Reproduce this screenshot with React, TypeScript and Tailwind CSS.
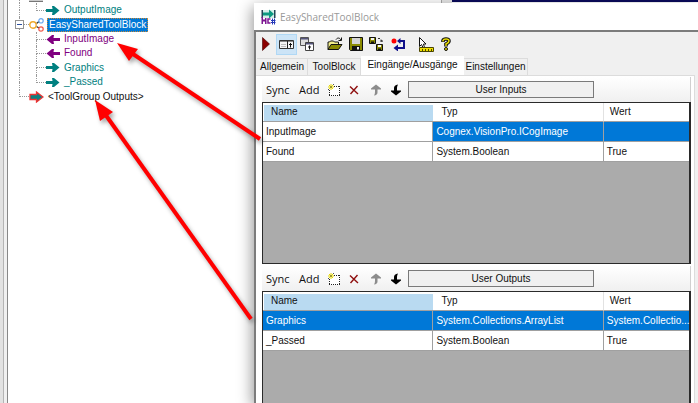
import React from "react";
import clsx from "clsx";

type IconProps = { className?: string };

const ArrowRight = ({ className }: IconProps) => (
  <svg viewBox="0 0 14 11" className={clsx("h-[11px] w-[14px] shrink-0", className)} aria-hidden="true">
    <path d="M0 4h6.500L6 1H8L13.500 5.500L8 10H6L6.500 7H0z" fill="currentColor" />
  </svg>
);

const ArrowLeft = ({ className }: IconProps) => (
  <svg viewBox="0 0 14 11" className={clsx("h-[11px] w-[14px] shrink-0", className)} aria-hidden="true">
    <path d="M14 4H7.500L8 1H6L0.500 5.500L6 10H8L7.500 7H14z" fill="currentColor" />
  </svg>
);

const OutputsIcon = () => (
  <svg viewBox="0 0 15 12" className="h-[12px] w-[15px] shrink-0" aria-hidden="true">
    <path d="M1 3.500h6.500V1L14 6L7.500 11V8.500H1z" fill="#0b8080" stroke="#e33" strokeWidth="1.300" />
  </svg>
);

const ToolBlockIcon = () => (
  <svg viewBox="0 0 15 14" className="h-[14px] w-[15px] shrink-0" fill="none" aria-hidden="true">
    <path d="M7.500 5.500L10 3.500M7.500 8.500L10 10" stroke="#333" strokeWidth="1.400" />
    <circle cx="4" cy="7" r="3.200" stroke="#f0a92c" strokeWidth="1.400" />
    <circle cx="12" cy="2.800" r="2.200" stroke="#6caaf0" strokeWidth="1.200" />
    <circle cx="12" cy="11" r="2.200" stroke="#f0594c" strokeWidth="1.200" />
  </svg>
);

const AppIcon = () => (
  <svg viewBox="0 0 15 16" className="h-[16px] w-[15px] shrink-0" aria-hidden="true">
    <path d="M1 1h13v8H1z" fill="#d5efea" />
    <path d="M0.500 1h1.500v8H0.500z" fill="#245" />
    <path d="M2 3.500h6V0.500L13 5L8 9.500V6.500H2z" fill="#0d9a82" />
    <path d="M13 1h1.500v8H13z" fill="#245" />
    <path d="M0.500 8H2v2.500h2V9h1.500v6H4v-2.500H2V15H0.500z" fill="#7d1692" />
    <path d="M9.500 10H7v4h2.500" stroke="#7d1692" strokeWidth="1.500" fill="none" />
    <path d="M10 11.500h4.500M10 13.500h4.500M11.500 9.500v6M13.500 9.500v6" stroke="#2438b8" fill="none" />
  </svg>
);

const RunIcon = () => (
  <svg viewBox="0 0 8 14" className="h-[14px] w-[8px]" aria-hidden="true">
    <path d="M0.500 0.500L7.500 7L0.500 13.500z" fill="#8b0000" stroke="#400" strokeWidth="0.600" />
  </svg>
);

const PanelIcon = () => (
  <svg viewBox="0 0 15 9" className="h-[9px] w-[15px]" aria-hidden="true">
    <path d="M0.500 0.500h14v8h-14z" fill="#f4f4f4" stroke="#333" />
    <path d="M1 1h13v1H1z" fill="#888" />
    <path d="M2 4.500h5M2 6.500h5" stroke="#bbb" />
    <path d="M8.500 1v7" stroke="#222" />
    <path d="M11.500 3v4.500M10 4.500h3" stroke="#111" />
  </svg>
);

const FloatIcon = () => (
  <svg viewBox="0 0 14 14" className="h-[14px] w-[14px]" aria-hidden="true">
    <path d="M0.500 0.500h8v8h-8z" fill="#ddd" stroke="#555" />
    <path d="M1 1h7v1.500H1z" fill="#55557c" />
    <path d="M5.500 5.500h8v8h-8z" fill="#fff" stroke="#444" />
    <path d="M6 6h7v1.500H6z" fill="#55557c" />
    <path d="M9.500 8.500v4M8 10h3" stroke="#111" />
  </svg>
);

const OpenIcon = () => (
  <svg viewBox="0 0 16 14" className="h-[14px] w-[16px]" aria-hidden="true">
    <path d="M1 12.500V5h1.500l1-1h3l1 1h4v2" fill="#f2ee8a" stroke="#111" />
    <path d="M1 12.500L4 7.500h11l-3.500 5z" fill="#8a8a00" stroke="#111" />
    <path d="M9 2.500c1.500-2 3.500-2 5 0.500M14.500 0.500v3h-3" fill="none" stroke="#111" />
  </svg>
);

const SaveIcon = () => (
  <svg viewBox="0 0 14 14" className="h-[14px] w-[14px]" aria-hidden="true">
    <path d="M0.500 0.500h13v13h-12l-1-1z" fill="#8a8a00" stroke="#111" />
    <path d="M3 1h8v6H3z" fill="#d4d4d4" />
    <path d="M3 9h8v4H3z" fill="#111" />
    <path d="M8 10h2v2.500H8z" fill="#eee" />
  </svg>
);

const SaveAllIcon = () => (
  <svg viewBox="0 0 15 14" className="h-[14px] w-[15px]" aria-hidden="true">
    <path d="M0.500 0.500h6v6h-6zM7.500 7.500h6v6h-6z" fill="#8a8a00" stroke="#111" />
    <path d="M2 1h3v2H2zM9 8h3v2H9z" fill="#f4f4f4" />
    <path d="M2 4.500h3V6H2zM9 11.500h3V13H9z" fill="#111" />
    <path d="M9 1.500h2M12 2.500l1 2.500M11 4h3" stroke="#333" fill="none" />
  </svg>
);

const ResetIcon = () => (
  <svg viewBox="0 0 15 13" className="h-[13px] w-[15px]" aria-hidden="true">
    <circle cx="3" cy="3" r="2.500" fill="#f00" />
    <path d="M8 3h5v7H6" fill="none" stroke="#10108a" strokeWidth="2" />
    <path d="M2.500 10L7 6.500v7z" fill="#10108a" />
    <path d="M6 3L9.500 0v6z" fill="#10108a" />
  </svg>
);

const MeasureIcon = () => (
  <svg viewBox="0 0 16 15" className="h-[15px] w-[16px]" aria-hidden="true">
    <path d="M1.500 0.500v9l2-2l1.500 3h1.500L5.500 7h2.500z" fill="#fff" stroke="#111" />
    <path d="M1.500 10.500h14v4h-14z" fill="#f0e000" stroke="#4a4500" />
    <path d="M4.500 12v2M7.500 12v2M10.500 12v2M13.500 12v2" stroke="#4a4500" />
  </svg>
);

const HelpIcon = () => (
  <svg viewBox="0 0 10 14" className="h-[14px] w-[10px]" fill="none" aria-hidden="true">
    <path d="M2 5V3.500Q2.500 2 5 2Q8 2 8 4Q8 5.500 5 7V9.500" stroke="#111" strokeWidth="3.600" />
    <path d="M2 4.500V3.500Q2.500 2 5 2Q8 2 8 4Q8 5.500 5 7V9" stroke="#e8dc00" strokeWidth="1.500" />
    <circle cx="5" cy="12" r="1.500" fill="#e8dc00" stroke="#111" />
  </svg>
);

const NewIcon = () => (
  <svg viewBox="0 0 12 12" className="h-[12px] w-[12px]" aria-hidden="true">
    <path d="M1 2h11v10H1z" fill="#fff" />
    <path d="M6 2.500h6M1.500 6v6M11.500 2v10M1 11.500h11" fill="none" stroke="#222" strokeDasharray="1 1" />
    <path d="M3 0v6M0 3h6M1 1l4 4M5 1L1 5" stroke="#e6d800" />
    <path d="M3 2v2M5 0.500h1M0 5.500h1" stroke="#555" />
  </svg>
);

const DeleteIcon = () => (
  <svg viewBox="0 0 10 10" className="h-[10px] w-[10px]" aria-hidden="true">
    <path d="M1 1.500L9 9M8.500 1L1.500 9" stroke="#8f1010" strokeWidth="1.400" />
  </svg>
);

const UpIcon = () => (
  <svg viewBox="0 0 10 12" className="h-[12px] w-[10px]" aria-hidden="true">
    <path d="M5 0.500L10 4.500V5.500H6.500V8.500Q6.500 11 3 11.500Q4 10 4 8V5.500H0V4.500z" fill="#8c8c8c" />
  </svg>
);

const DownIcon = () => (
  <svg viewBox="0 0 10 12" className="h-[12px] w-[10px]" aria-hidden="true">
    <path d="M5 11.500L0 7.500V6.500H3V4Q3 1 7 0.500Q6 2 6 4V6.500H10V7.500z" fill="#000" />
  </svg>
);

const TreeGuide = ({ width, branch, last }: { width: string; branch?: boolean; last?: boolean }) => (
  <span className={clsx("flex shrink-0 flex-col self-stretch", width)}>
    <span className={clsx("flex-1 border-l border-dotted border-[#999]", branch && "border-b")} />
    <span className={clsx("flex-1 border-dotted border-[#999]", !last && "border-l")} />
  </span>
);

const leaves = [
  { name: "InputImage", input: true },
  { name: "Found", input: true },
  { name: "Graphics", input: false },
  { name: "_Passed", input: false },
];

const TreeLeaf = ({ name, input, last }: { name: string; input: boolean; last?: boolean }) => (
  <li className={clsx("flex min-h-0 flex-1 items-center", input ? "text-[#800080]" : "text-[#008080]")}>
    <TreeGuide width="w-[17px]" />
    <TreeGuide width="w-[10px]" branch last={last} />
    {input ? <ArrowLeft /> : <ArrowRight />}
    <span className="ml-1 leading-[14px]">{name}</span>
  </li>
);

const ToolTree = () => (
  <aside className="flex w-[254px] shrink-0 bg-white">
    <div className="w-[8px] shrink-0 border-r border-[#888] bg-[#f0f0f0]">
      <div className="h-full w-[4px] border-r border-[#b4b4b4] bg-[#e2e2e2]" />
    </div>
    <div className="flex-1 pl-[11px]">
      <div className="flex h-[3px] gap-[9px]">
        <span className="w-px border-l border-dotted border-[#999]" />
        <span className="h-[2px] w-[14px] border-b border-[#777] bg-[#ccc]" />
      </div>
      <ul className="flex h-[101px] flex-col">
        <TreeLeaf name="OutputImage" input={false} last />
        <li className="flex min-h-0 flex-1 items-center">
          <span className="relative flex self-stretch">
            <TreeGuide width="w-[10px]" branch />
            <button
              type="button"
              aria-label="Collapse EasySharedToolBlock"
              className="absolute top-[3px] -left-1 flex h-[9px] w-[9px] items-center justify-center border border-[#919191] bg-white"
            >
              <span className="h-px w-[5px] bg-[#2b4fa0]" />
            </button>
          </span>
          <ToolBlockIcon />
          <span className="ml-[3px] border border-dotted border-[#c98a3a] bg-[#0078d7] px-px leading-[12px] text-white">
            EasySharedToolBlock
          </span>
        </li>
        {leaves.map((leaf, i) => (
          <TreeLeaf key={leaf.name} {...leaf} last={i === leaves.length - 1} />
        ))}
        <li className="flex min-h-0 flex-1 items-center">
          <TreeGuide width="w-[10px]" branch last />
          <OutputsIcon />
          <span className="ml-1 leading-[14px]">&lt;ToolGroup Outputs&gt;</span>
        </li>
      </ul>
    </div>
  </aside>
);

const tools = [
  { label: "Run", icon: <RunIcon />, width: "w-[20px]" },
  { label: "Show panel", icon: <PanelIcon />, width: "w-[21px]", active: true },
  { label: "Floating window", icon: <FloatIcon />, width: "w-[17px]" },
  { label: "Open", icon: <OpenIcon />, width: "w-[29px]" },
  { label: "Save", icon: <SaveIcon />, width: "w-[20px]" },
  { label: "Save all", icon: <SaveAllIcon />, width: "w-[21px]" },
  { label: "Reset", icon: <ResetIcon />, width: "w-[22px]" },
  { label: "Measure", icon: <MeasureIcon />, width: "w-[28px]" },
  { label: "Help", icon: <HelpIcon />, width: "w-[17px]" },
];

const tabs = [
  { name: "Allgemein", width: "w-[51px]" },
  { name: "ToolBlock", width: "w-[53px]" },
  { name: "Eingänge/Ausgänge", width: "w-[103px]", active: true },
  { name: "Einstellungen", width: "w-[64px]" },
];

const GridToolbar = ({ title }: { title: string }) => (
  <div className="flex h-[25px] shrink-0 items-center border-r border-[#d0d0d0] bg-gradient-to-b from-white to-[#f0f0f0] pl-1">
    <button type="button" className="w-[33px] text-left font-['Open_Sans',sans-serif] text-[11px]">
      Sync
    </button>
    <button type="button" className="w-[29px] text-left font-['Open_Sans',sans-serif] text-[11px]">
      Add
    </button>
    <button type="button" aria-label="New" className="w-[21px]">
      <NewIcon />
    </button>
    <button type="button" aria-label="Delete" className="w-[22px]">
      <DeleteIcon />
    </button>
    <button type="button" aria-label="Move up" className="w-[20px]">
      <UpIcon />
    </button>
    <button type="button" aria-label="Move down" className="w-[17px]">
      <DownIcon />
    </button>
    <button type="button" className="h-[17px] w-[186px] border border-[#7a7a7a] bg-[#f0f0f0]">
      {title}
    </button>
  </div>
);

type Row = { name: string; type: string; value: string };

const inputs: Row[] = [
  { name: "InputImage", type: "Cognex.VisionPro.ICogImage", value: "" },
  { name: "Found", type: "System.Boolean", value: "True" },
];

const outputs: Row[] = [
  { name: "Graphics", type: "System.Collections.ArrayList", value: "System.Collectio..." },
  { name: "_Passed", type: "System.Boolean", value: "True" },
];

const cell = "whitespace-nowrap border-r border-b border-[#a0a0a0] px-[3px] last:border-r-0";

const TerminalGrid = ({ rows, editing, className }: { rows: Row[]; editing?: boolean; className: string }) => (
  <div className={clsx("border border-r-2 border-[#2a2a2a] bg-[#ababab]", className)}>
    <table className="w-full table-fixed border-separate border-spacing-0 text-left">
      <colgroup>
        <col className="w-[40%]" />
        <col className="w-[40%]" />
        <col className="w-[20%]" />
      </colgroup>
      <thead>
        <tr className="h-[19px] bg-white">
          <th className="border-b border-[#a0a0a0] bg-[#b9daf1] px-2 font-normal shadow-[inset_1px_2px_0_white]">Name</th>
          <th className="border-r border-b border-r-[#e2e2e2] border-b-[#a0a0a0] px-2 font-normal">Typ</th>
          <th className="border-b border-[#a0a0a0] px-[6px] font-normal">Wert</th>
        </tr>
      </thead>
      <tbody>
        {rows.map((row, i) => (
          <tr key={row.name} className={clsx("h-[20px]", i === 0 ? "bg-[#0078d7] text-white" : "bg-white")}>
            <td className={clsx(cell, editing && i === 0 && "bg-white text-[#111]")}>{row.name}</td>
            <td className={cell}>{row.type}</td>
            <td className={cell}>{row.value}</td>
          </tr>
        ))}
      </tbody>
    </table>
  </div>
);

const ToolWindow = () => (
  <section className="relative flex min-h-0 flex-1 flex-col shadow-[-2px_4px_14px_rgba(0,0,0,0.4)]">
    <header className="flex h-[27px] shrink-0 items-center gap-1 bg-white pl-[7px]">
      <AppIcon />
      <h1 className="font-['Open_Sans',sans-serif] text-[10px] text-[#999]">EasySharedToolBlock</h1>
    </header>
    <div className="flex min-h-0 flex-1 flex-col border-t-2 border-l-2 border-[#7c7c7c] bg-[#f0f0f0]">
      <div className="flex h-[24px] shrink-0 items-center">
        {tools.map((tool) => (
          <button
            key={tool.label}
            type="button"
            aria-label={tool.label}
            className={clsx(
              "flex h-[21px] items-center",
              tool.width,
              tool.label === "Run" && "pl-[6px]",
              tool.active ? "justify-center border border-[#b0d8f5] bg-[#cce4f7]" : tool.label !== "Run" && "justify-end",
            )}
          >
            {tool.icon}
          </button>
        ))}
      </div>
      <div role="tablist" className="flex h-[19px] shrink-0 items-end pl-px">
        {tabs.map((tab) => (
          <button
            key={tab.name}
            type="button"
            role="tab"
            aria-selected={!!tab.active}
            className={clsx(
              "whitespace-nowrap",
              tab.width,
              tab.active ? "h-[19px] bg-white pb-[2px]" : "h-[17px] border-t border-r border-[#dcdcdc] bg-[#f0f0f0]",
            )}
          >
            {tab.name}
          </button>
        ))}
      </div>
      <div className="mr-[3px] flex min-h-0 flex-1 flex-col border-t border-r border-[#dcdcdc] bg-white pt-px pr-[3px] pl-[6px]">
        <GridToolbar title="User Inputs" />
        <TerminalGrid rows={inputs} editing className="mb-[2px] h-[162px] shrink-0" />
        <GridToolbar title="User Outputs" />
        <TerminalGrid rows={outputs} className="min-h-0 flex-1 border-b-0" />
      </div>
    </div>
  </section>
);

const Callouts = () => (
  <svg className="pointer-events-none absolute top-0 left-0 h-[403px] w-[280px]" viewBox="0 0 280 403" aria-hidden="true">
    <g fill="#f00" stroke="none" className="drop-shadow-[2px_3px_2px_rgba(0,0,0,0.35)]">
      <path d="M260 139L130 52" stroke="#f00" strokeWidth="4" />
      <path d="M117 43L138 49L129 61z" />
      <path d="M251 319L105 114" stroke="#f00" strokeWidth="4" />
      <path d="M95 100L113 112L100 121z" />
    </g>
  </svg>
);

export default function App() {
  return (
    <main className="relative flex h-screen overflow-hidden bg-white font-['Liberation_Sans',Arial,sans-serif] text-[10px] leading-[14px] text-[#111]">
      <ToolTree />
      <div className="flex min-w-0 flex-1 flex-col">
        <div className="flex h-[3px] shrink-0">
          <span className="w-[187px] bg-white" />
          <span className="w-[11px] border-l border-[#aaa] bg-[#e8e8e8]" />
          <span className="h-[2px] flex-1 bg-[#0a0a5c]" />
        </div>
        <ToolWindow />
      </div>
      <Callouts />
    </main>
  );
}
